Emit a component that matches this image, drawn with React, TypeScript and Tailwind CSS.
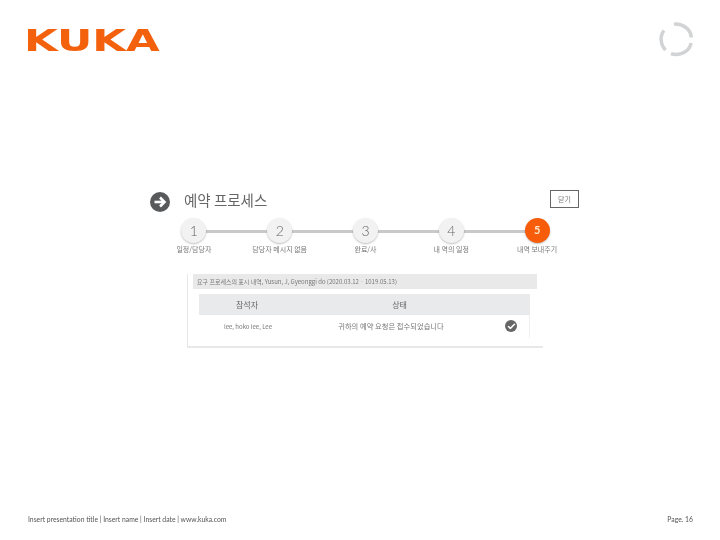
import { Check } from "lucide-react";

const steps = [
  { num: "1", label: "일정/담당자" },
  { num: "2", label: "담당자 메시지 없음" },
  { num: "3", label: "완료/사" },
  { num: "4", label: "내 역의 일정" },
  { num: "5", label: "내역 보내주기", active: true },
];

const korean = "font-['Noto_Sans_CJK_KR','Noto_Sans',sans-serif]";

function Spinner() {
  return (
    <svg width="36" height="36" viewBox="0 0 36 36" fill="none" stroke="#d2d3d4" strokeWidth="3.5">
      <path d="M16 3.2 C 24 2.2 33 8 33.2 16.5" />
      <path d="M33 22 C 32 29 25 33.5 18 33.5 C 16 33.5 14.5 33.2 13 32.6" />
      <path d="M7.5 29 C 2.5 24 1.5 15 6 9.5" />
    </svg>
  );
}

function Stepper() {
  return (
    <div className="relative ml-px mt-[6px] flex w-[429px] justify-between">
      <div className="absolute left-[30px] right-[50px] top-[12px] h-[3px] bg-[#c9c9c9]" />
      {steps.map((step) => (
        <div key={step.num} className="relative flex w-[86px] flex-col items-center">
          <div
            className={
              step.active
                ? "flex h-[25px] w-[25px] items-center justify-center rounded-full bg-[#f65c0a] text-[11px] font-bold text-[#fde5c8] shadow-[0_1px_2px_rgba(0,0,0,0.25)]"
                : "flex h-[25px] w-[25px] items-center justify-center rounded-full bg-[#f2f2f2] text-[14px] font-light text-[#666] shadow-[0_1px_2px_rgba(0,0,0,0.25)]"
            }
          >
            {step.num}
          </div>
          <div className={`whitespace-nowrap text-[7px] leading-[12px] text-[#777] ${korean}`}>{step.label}</div>
        </div>
      ))}
    </div>
  );
}

function ResultCard() {
  return (
    <div className="ml-[37px] mt-[19px] h-[74px] w-[356px] border-b-2 border-l border-[#e8e8e8] pl-[5px] pr-[6px]">
      <div className={`flex h-[15px] w-[344px] items-center truncate bg-[#e9e9e9] pl-[4px] text-[6px] text-[#777] ${korean}`}>
        요구 프로세스의 표시 내역, Yusun, J, Gyeonggi do (2020.03.12 · 1019.05.13)
      </div>
      <div className="ml-[6px] mt-[5px] w-[331px]">
        <div className={`flex h-[21px] items-center bg-[#e9eaeb] text-[8px] text-[#666] ${korean}`}>
          <div className="w-[96px] text-center">참석자</div>
          <div className="w-[197px] pl-[12px] text-center">상태</div>
        </div>
        <div className={`flex h-[23px] items-center border-r border-[#f0f0f0] text-[7px] text-[#777] ${korean}`}>
          <div className="w-[92px] whitespace-nowrap pl-[6px] text-center text-[6px]">lee, hoko lee, Lee</div>
          <div className="w-[176px] whitespace-nowrap pl-[24px] text-center text-[7.3px]">귀하의 예약 요청은 접수되었습니다</div>
          <div className="ml-[38px] mb-px flex h-[12px] w-[12px] items-center justify-center rounded-full bg-[#666]">
            <Check size={9} strokeWidth={4} color="#fff" />
          </div>
        </div>
      </div>
    </div>
  );
}

export default function App() {
  return (
    <div className="flex h-[540px] w-[720px] flex-col bg-white font-['Lato',sans-serif]">
      <header className="flex items-start justify-between pl-[24px] pr-[26px] pt-[21px]">
        <div className="mt-[9px] flex h-[22px] w-[132px] items-center blur-[0.3px]">
          <span className="origin-left scale-x-[1.45] font-['DejaVu_Sans',sans-serif] text-[30px] font-bold leading-[22px] text-[#f4610d]">
            KUKA
          </span>
        </div>
        <Spinner />
      </header>

      <main className="ml-[150px] mt-[133px] w-[429px] blur-[0.4px]">
        <div className="flex items-start justify-between">
          <div className="flex items-start gap-[14px]">
            <div className="mt-[2px] flex h-[20px] w-[20px] items-center justify-center rounded-full bg-[#58595b]">
              <svg width="14" height="14" viewBox="0 0 14 14" fill="none" stroke="#fff" strokeWidth="2.6">
                <path d="M1.5 7 H11" />
                <path d="M7 2.5 L11.5 7 L7 11.5" />
              </svg>
            </div>
            <h1 className={`text-[14.5px] leading-[20px] text-[#666] ${korean}`}>예약 프로세스</h1>
          </div>
          <button className={`flex h-[18px] w-[29px] items-center justify-center border border-[#666] text-[7px] text-[#777] ${korean}`}>
            닫기
          </button>
        </div>
        <Stepper />
        <ResultCard />
      </main>

      <footer className="mt-auto flex items-center justify-between pb-[15px] pl-[28px] pr-[27px] text-[6.8px] leading-[12px] text-[#555] blur-[0.3px]">
        <span>Insert presentation title | Insert name | Insert date | www.kuka.com</span>
        <span>Page. 16</span>
      </footer>
    </div>
  );
}
